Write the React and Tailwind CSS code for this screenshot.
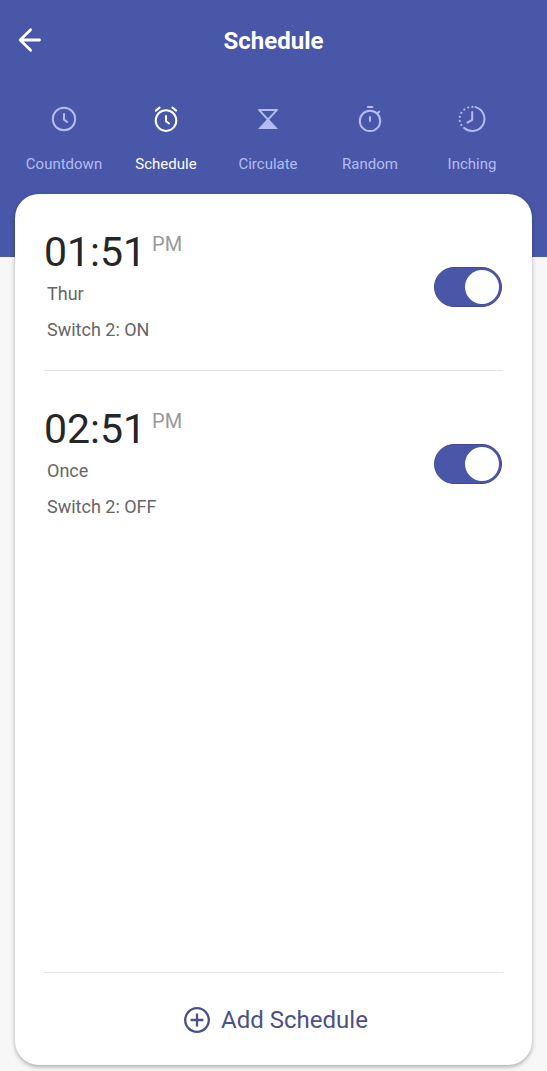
import { useState } from "react";

const stroke = {
  fill: "none",
  stroke: "currentColor",
  strokeWidth: 2,
  strokeLinecap: "round",
  strokeLinejoin: "round",
};

function BackIcon() {
  return (
    <svg width="24" height="26" viewBox="0 0 24 26" aria-hidden="true" {...stroke} strokeWidth="2.8">
      <path d="M12.6 2.8 2.2 13l10.4 10.2M2.5 13h19" />
    </svg>
  );
}

function CountdownIcon() {
  return (
    <svg width="28" height="28" viewBox="0 0 28 28" aria-hidden="true" {...stroke}>
      <circle cx="14" cy="14" r="11.2" />
      <path d="M14 9v5.6l3.2 2.4" />
    </svg>
  );
}

function AlarmIcon() {
  return (
    <svg width="28" height="28" viewBox="0 0 28 28" aria-hidden="true" {...stroke}>
      <circle cx="14" cy="15.6" r="10.3" />
      <path d="M14 11v5.2l3 2.3M3.8 5.6l3.8-3M24.2 5.6l-3.8-3" />
    </svg>
  );
}

function HourglassIcon() {
  return (
    <svg width="28" height="28" viewBox="0 0 28 28" aria-hidden="true">
      <path d="M5 4.9h18L14 14.6z" fill="none" stroke="currentColor" strokeWidth="2" strokeLinejoin="round" />
      <path d="M14 13.2 24 24H4z" fill="currentColor" />
    </svg>
  );
}

function StopwatchIcon() {
  return (
    <svg width="28" height="28" viewBox="0 0 28 28" aria-hidden="true" {...stroke}>
      <circle cx="14" cy="15.9" r="10.2" />
      <path d="M14 12v4M11.8 1.9h4.6M21.6 8.2l1.6-1.6" />
    </svg>
  );
}

function InchingIcon() {
  return (
    <svg width="28" height="28" viewBox="0 0 28 28" aria-hidden="true" {...stroke}>
      <path d="M17.6 2.1A12.2 12.2 0 1 1 6.2 23" />
      <path d="M14.2 7v7.8L9.4 17.6" />
      <g fill="currentColor" stroke="none">
        <circle cx="14.4" cy="1.9" r="1.1" />
        <circle cx="10.2" cy="2.5" r="1.1" />
        <circle cx="6.3" cy="4.6" r="1.1" />
        <circle cx="3.3" cy="7.9" r="1.1" />
        <circle cx="1.8" cy="11.8" r="1.1" />
        <circle cx="1.8" cy="16" r="1.1" />
        <circle cx="3.3" cy="20.1" r="1.1" />
      </g>
    </svg>
  );
}

function PlusCircleIcon() {
  return (
    <svg width="28" height="28" viewBox="0 0 28 28" aria-hidden="true" {...stroke} strokeWidth="2.3" strokeLinecap="butt">
      <circle cx="14" cy="14" r="11.8" />
      <path d="M14 7.6v12.8M7.6 14h12.8" />
    </svg>
  );
}

const tabs = [
  { name: "Countdown", Icon: CountdownIcon },
  { name: "Schedule", Icon: AlarmIcon },
  { name: "Circulate", Icon: HourglassIcon },
  { name: "Random", Icon: StopwatchIcon },
  { name: "Inching", Icon: InchingIcon },
];

const schedules = [
  { id: "s1", time: "01:51", period: "PM", repeat: "Thur", action: "Switch 2: ON" },
  { id: "s2", time: "02:51", period: "PM", repeat: "Once", action: "Switch 2: OFF" },
];

function ScheduleRow({ id, time, period, repeat, action }) {
  const [on, setOn] = useState(true);
  return (
    <li className="flex items-center justify-between border-b border-[#e4e4e4] pt-[34px] pr-px pb-7 last:border-b-0">
      <label htmlFor={id} className="text-lg leading-6 text-[#666666]">
        <span className="flex items-start gap-1.5 leading-[48px]">
          <span className="text-[41px] text-[#262626]">{time}</span>
          <span className="pt-1 text-xl leading-6 text-[#999999]">{period}</span>
        </span>
        <span className="mt-1.5 block pl-[3px]">{repeat}</span>
        <span className="mt-3 block pl-[3px]">{action}</span>
      </label>
      <input
        id={id}
        type="checkbox"
        role="switch"
        checked={on}
        onChange={() => setOn(!on)}
        className="mt-1 flex h-10 w-[68px] shrink-0 cursor-pointer appearance-none items-center rounded-full border border-[#45498f] bg-[#b8b8b8] px-0.5 before:size-[34px] before:rounded-full before:bg-white before:content-[''] checked:justify-end checked:bg-[#4957a9]"
      />
    </li>
  );
}

export default function App() {
  const [active, setActive] = useState("Schedule");
  return (
    <div className="flex min-h-screen flex-col bg-[#f7f7f7] pb-1.5 font-[Roboto,sans-serif]">
      <header className="bg-[#4957a9] pb-[82px] text-white">
        <div className="grid grid-cols-[1fr_auto_1fr] items-center px-[18px] pt-5">
          <button type="button" aria-label="Back" className="flex h-10 w-10 items-center">
            <BackIcon />
          </button>
          <h1 className="pt-0.5 text-2xl font-bold">Schedule</h1>
        </div>
        <nav className="grid grid-cols-5 pt-[45px] pr-6 pl-[13px]">
          {tabs.map(({ name, Icon }) => (
            <button
              key={name}
              type="button"
              aria-current={name === active ? "page" : undefined}
              onClick={() => setActive(name)}
              className="flex flex-col items-center gap-5 text-[15px] leading-[22px] text-[#b4bcf3] aria-[current=page]:text-white"
            >
              <Icon />
              {name}
            </button>
          ))}
        </nav>
      </header>
      <main className="mx-[15px] -mt-[63px] flex flex-1 flex-col rounded-3xl bg-white px-[29px] shadow-[0_2px_4px_rgba(0,0,0,0.3)]">
        <ul className="flex-1">
          {schedules.map((s) => (
            <ScheduleRow key={s.id} {...s} />
          ))}
        </ul>
        <button
          type="button"
          className="flex h-[93px] items-center justify-center gap-2.5 border-t border-[#e4e4e4] pt-0.5 pl-1 text-2xl text-[#4b5088]"
        >
          <PlusCircleIcon />
          Add Schedule
        </button>
      </main>
    </div>
  );
}
